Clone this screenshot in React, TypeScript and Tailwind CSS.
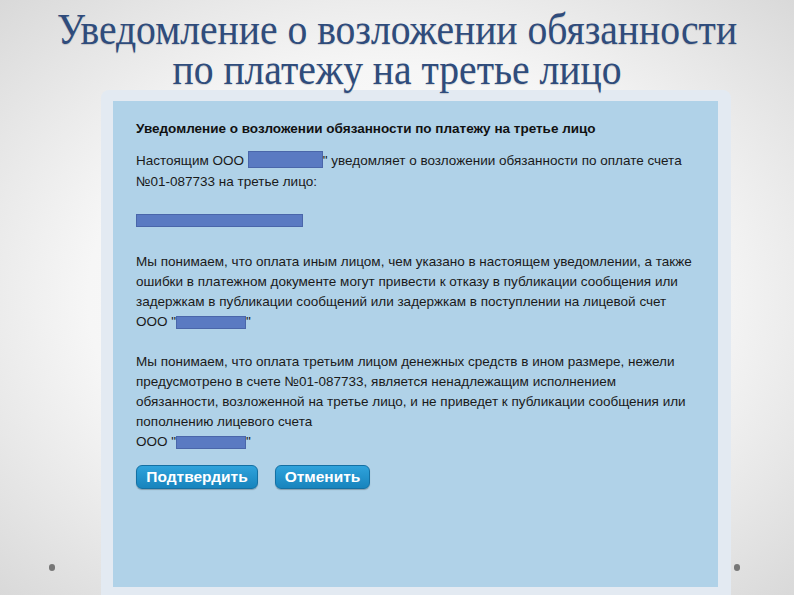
import React from 'react'

const serif = { fontFamily: '"Liberation Serif", "Times New Roman", serif' }
const sans = { fontFamily: '"Liberation Sans", Arial, sans-serif' }

function Redacted({ className = '' }: { className?: string }) {
  return (
    <span
      className={`inline-block align-[-3px] bg-[#5a7ac2] border border-[#4a66aa] ${className}`}
    />
  )
}

function Button({ label, width }: { label: string; width: string }) {
  return (
    <button
      type="button"
      className={`${width} h-[24px] rounded-[6px] border border-[#1470a3] bg-gradient-to-b from-[#2fa3dc] to-[#1784bd] text-white text-[15.5px] font-bold leading-none shadow-[0_1px_1px_rgba(0,0,0,0.25)]`}
      style={sans}
    >
      {label}
    </button>
  )
}

export default function App() {
  return (
    <div className="relative w-[794px] h-[595px] overflow-hidden bg-[radial-gradient(ellipse_at_center,#ffffff_0%,#f6f6f6_55%,#d9d9d9_100%)]">
      {/* Slide title (slide is a bit squeezed horizontally) */}
      <h1
        className="pt-[10px] h-[90px] text-center text-[44px] font-normal leading-[40px] text-[#2f4c7c] whitespace-nowrap scale-x-[0.9] [text-shadow:0_1px_1px_rgba(0,0,0,0.15)]"
        style={serif}
      >
        Уведомление о возложении обязанности
        <br />
        по платежу на третье лицо
      </h1>

      {/* Screenshot frame */}
      <div className="ml-[101px] w-[630px] h-[505px] rounded-t-[8px] bg-[#e3eaf2] pt-[11px] pl-[12px]">
        <div
          className="w-[605px] h-[486px] bg-[#b0d2e8] pt-[18px] pl-[23px] text-[13.5px] leading-[20px] text-[#1a1a1a]"
          style={sans}
        >
          <div className="font-bold text-[#111]">
            Уведомление о возложении обязанности по платежу на третье лицо
          </div>

          <p className="mt-[11px] leading-[21px]">
            Настоящим ООО <Redacted className="w-[75px] h-[17px]" />" уведомляет о возложении
            обязанности по оплате счета
            <br />
            №01-087733 на третье лицо:
          </p>

          <div className="mt-[22px] h-[20px]">
            <span className="block w-[167px] h-[13px] bg-[#5a7ac2] border border-[#4a66aa]" />
          </div>

          <p className="mt-[18px]">
            Мы понимаем, что оплата иным лицом, чем указано в настоящем уведомлении, а также
            <br />
            ошибки в платежном документе могут привести к отказу в публикации сообщения или
            <br />
            задержкам в публикации сообщений или задержкам в поступлении на лицевой счет
            <br />
            ООО "<Redacted className="w-[70px] h-[13px]" />"
          </p>

          <p className="mt-[20px]">
            Мы понимаем, что оплата третьим лицом денежных средств в ином размере, нежели
            <br />
            предусмотрено в счете №01-087733, является ненадлежащим исполнением
            <br />
            обязанности, возложенной на третье лицо, и не приведет к публикации сообщения или
            <br />
            пополнению лицевого счета
            <br />
            ООО "<Redacted className="w-[70px] h-[13px]" />"
          </p>

          <div className="mt-[13px] flex gap-[17px]">
            <Button label="Подтвердить" width="w-[122px]" />
            <Button label="Отменить" width="w-[95px]" />
          </div>
        </div>
      </div>

      {/* Slide bullets */}
      <span className="absolute left-[49px] top-[564px] w-[6px] h-[7px] rounded-full bg-[#777]" />
      <span className="absolute left-[734px] top-[564px] w-[6px] h-[7px] rounded-full bg-[#777]" />
    </div>
  )
}
